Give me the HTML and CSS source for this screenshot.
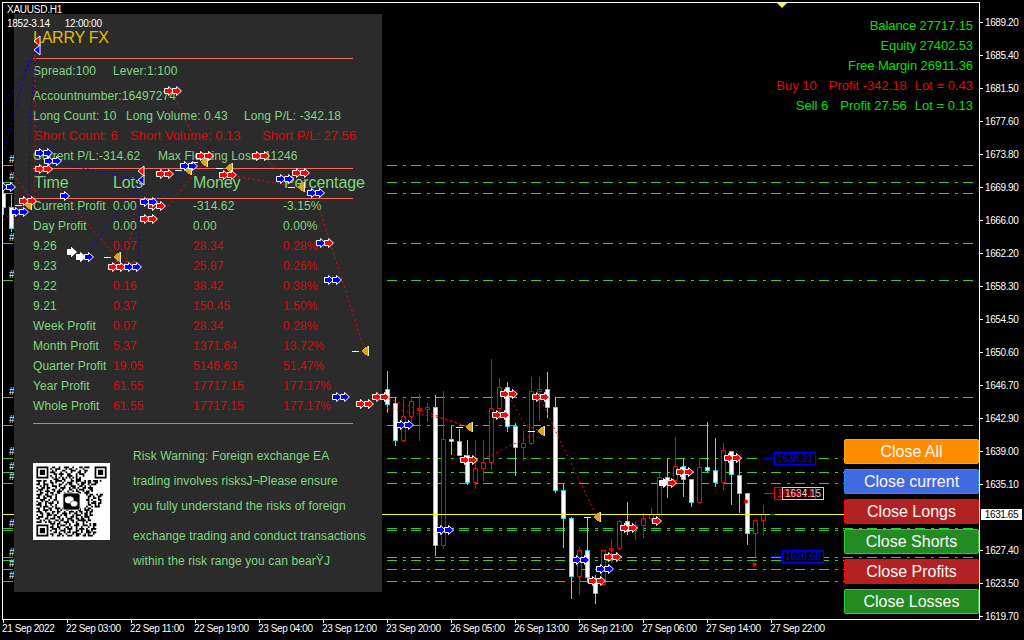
FILE: index.html
```html
<!DOCTYPE html>
<html lang="en">
<head>
<meta charset="utf-8">
<title>XAUUSD.H1</title>
<link rel="stylesheet" href="styles.css">
</head>
<body>
<div class="terminal">
  <main class="chart">
    <svg class="layer" viewBox="3 3 976 616" aria-hidden="true">
      <path class="levels" d="M3 165.5H979M3 182.5H979M3 193.5H979M3 243.5H979M3 280.5H979M3 397.5H979M3 425.5H979M3 458.5H979M3 472.5H979M3 483.5H979M3 528.5H979M3 530.5H979M3 557.5H979M3 560.5H979M3 569.5H979M3 581.5H979"/>
      <path class="wick-up" d="M3.5 190V215M11.5 195V232M387.5 371V413M395.5 397V446M435.5 395V556M451.5 426V455M459.5 429V456M467.5 440V485M507.5 382V432M515.5 423V476M547.5 372V418M555.5 397V493M563.5 483V548M571.5 517V599M587.5 517V583M595.5 575V604M627.5 502V535M667.5 459V498M683.5 458V497M691.5 479V507M707.5 422V472M715.5 438V487M731.5 452V505M739.5 457V513M747.5 493V545"/>
      <path class="wick-down" d="M403.5 399V441M411.5 399V422M419.5 394V441M427.5 403V422M443.5 391V549M475.5 440V489M483.5 440V481M491.5 359V470M499.5 378V419M523.5 431V461M531.5 377V445M539.5 377V421M579.5 547V595M603.5 550V585M611.5 539V563M619.5 520V550M635.5 522V540M643.5 513V538M651.5 508V522M659.5 473V517M675.5 437V480M699.5 458V503M723.5 443V490M755.5 520V557M763.5 505V535"/>
      <path class="body-up" d="M1.5 193.5h4v14h-4zM9.5 207.5h4v21h-4zM385.5 389.5h4v15h-4zM393.5 403.5h4v37h-4zM433.5 407.5h4v138h-4zM449.5 439.5h4v2h-4zM457.5 441.5h4v14h-4zM465.5 455.5h4v27h-4zM505.5 387.5h4v39h-4zM513.5 426.5h4v21h-4zM545.5 389.5h4v18h-4zM553.5 407.5h4v83h-4zM561.5 490.5h4v28h-4zM569.5 518.5h4v58h-4zM585.5 550.5h4v27h-4zM593.5 582.5h4v11h-4zM625.5 521.5h4v10h-4zM665.5 477.5h4v4h-4zM681.5 466.5h4v13h-4zM689.5 479.5h4v23h-4zM705.5 467.5h4v3h-4zM713.5 470.5h4v12h-4zM729.5 451.5h4v23h-4zM737.5 475.5h4v18h-4zM745.5 493.5h4v40h-4z"/>
      <path class="body-down" d="M401.5 416.5h4v24h-4zM409.5 401.5h4v15h-4zM417.5 408.5h4v2h-4zM425.5 407.5h4v2h-4zM441.5 439.5h4v106h-4zM473.5 468.5h4v14h-4zM481.5 462.5h4v6h-4zM489.5 408.5h4v54h-4zM497.5 387.5h4v21h-4zM521.5 443.5h4v4h-4zM529.5 391.5h4v52h-4zM537.5 389.5h4v2h-4zM577.5 550.5h4v26h-4zM601.5 550.5h4v34h-4zM609.5 548.5h4v2h-4zM617.5 521.5h4v27h-4zM633.5 525.5h4v2h-4zM641.5 518.5h4v7h-4zM649.5 514.5h4v4h-4zM657.5 477.5h4v37h-4zM673.5 466.5h4v14h-4zM697.5 467.5h4v35h-4zM721.5 450.5h4v32h-4zM753.5 520.5h4v13h-4zM761.5 514.5h4v6h-4z"/>
      <path class="bid" d="M3 514.5H979"/>
      <path class="tick-now" d="M770 514.5H775"/>
      <g class="ticket">
        <text x="9" y="163">#</text><text x="9" y="180">#</text><text x="9" y="241">#</text><text x="9" y="278">#</text><text x="9" y="395">#</text><text x="9" y="423">#</text><text x="9" y="455">#</text><text x="9" y="470">#</text><text x="9" y="480">#</text><text x="9" y="527">#</text><text x="9" y="556">#</text><text x="9" y="567">#</text><text x="9" y="579">#</text>
      </g>
    </svg>

    <section class="panel">
      <h1 class="brand">LARRY FX</h1>
      <div class="rule rule-first"></div>
      <div class="info info-spread"><span>Spread:100</span><span>Lever:1:100</span></div>
      <div class="info info-account"><span>Accountnumber:16497274</span></div>
      <div class="info info-long"><span>Long Count: 10</span><span>Long Volume: 0.43</span><span>Long P/L: -342.18</span></div>
      <div class="info info-short loss"><span>Short Count: 6</span><span>Short Volume: 0.13</span><span>Short P/L: 27.56</span></div>
      <div class="info info-current"><span>Current P/L:-314.62</span><span>Max Floating Loss:-11246</span></div>
      <div class="rule rule-tight"></div>
      <div class="heads"><span>Time</span><span>Lots</span><span>Money</span><span>Percentage</span></div>
      <div class="rule rule-head"></div>
      <div class="stats">
        <span>Current Profit</span><span>0.00</span><span>-314.62</span><span>-3.15%</span>
        <span>Day Profit</span><span>0.00</span><span>0.00</span><span>0.00%</span>
        <span>9.26</span><span class="loss">0.07</span><span class="loss">28.34</span><span class="loss">0.28%</span>
        <span>9.23</span><span class="loss">0.06</span><span class="loss">25.87</span><span class="loss">0.26%</span>
        <span>9.22</span><span class="loss">0.16</span><span class="loss">38.42</span><span class="loss">0.38%</span>
        <span>9.21</span><span class="loss">0.37</span><span class="loss">150.45</span><span class="loss">1.50%</span>
        <span>Week Profit</span><span class="loss">0.07</span><span class="loss">28.34</span><span class="loss">0.28%</span>
        <span>Month Profit</span><span class="loss">5.37</span><span class="loss">1371.64</span><span class="loss">13.72%</span>
        <span>Quarter Profit</span><span class="loss">19.05</span><span class="loss">5146.63</span><span class="loss">51.47%</span>
        <span>Year Profit</span><span class="loss">61.55</span><span class="loss">17717.15</span><span class="loss">177.17%</span>
        <span>Whole Profit</span><span class="loss">61.55</span><span class="loss">17717.15</span><span class="loss">177.17%</span>
      </div>
      <div class="rule rule-end"></div>
      <div class="notice">
        <svg class="qr" viewBox="-2 -2 45 45" aria-hidden="true">
          <rect x="-2" y="-2" width="45" height="45" fill="#fff"/>
          <path class="qr-eye" d="M.5.5h6v6h-6zM34.5.5h6v6h-6zM.5 34.5h6v6h-6z"/>
          <path class="qr-core" d="M2 2h3v3h-3zM36 2h3v3h-3zM2 36h3v3h-3z"/>
          <path class="qr-bits" d="M9 .5h2m2 0h1m2 0h3m2 0h1m3 0h2m1 0h3M8 1.5h1m2 0h3m3 0h1m1 0h2m2 0h1m3 0h1M9 2.5h1m1 0h1m3 0h2m3 0h3m2 0h1m2 0h2M8 3.5h3m3 0h1m2 0h1m2 0h1m3 0h2m2 0h1M10 4.5h2m1 0h3m2 0h2m3 0h1m1 0h3M8 5.5h1m2 0h1m2 0h1m3 0h3m2 0h1m3 0h1M9 6.5h1m1 0h1m1 0h1m1 0h1m1 0h1m1 0h1m1 0h1m1 0h1m1 0h1M10 7.5h3m2 0h2m3 0h1m2 0h3M0 8.5h3m1 0h2m2 0h1m2 0h4m1 0h1m3 0h2m1 0h3m2 0h1m1 0h2m1 0h3m1 0h1M1 9.5h1m2 0h1m3 0h2m1 0h1m3 0h1m2 0h3m2 0h1m2 0h3m1 0h2m2 0h2M0 10.5h2m2 0h3m2 0h1m3 0h2m2 0h1m1 0h2m3 0h1m1 0h2m2 0h1m1 0h3M2 11.5h1m1 0h1m1 0h1m2 0h3m1 0h1m2 0h1m3 0h3m2 0h2m1 0h1m2 0h1M0 12.5h1m2 0h2m1 0h2m3 0h1m2 0h3m2 0h1m1 0h2m1 0h1m2 0h2m1 0h3M1 13.5h3m2 0h1m2 0h2m2 0h1m1 0h1m3 0h2m2 0h1m1 0h3m3 0h2M0 14.5h1m1 0h1m2 0h3m2 0h1m1 0h3m3 0h1m2 0h1m1 0h2m2 0h1m1 0h2m1 0h1M2 15.5h2m2 0h1m1 0h2m2 0h2m2 0h1m1 0h3m3 0h2m2 0h3M0 16.5h3m2 0h2m2 0h1m1 0h1m17 0h1m1 0h2m2 0h1m1 0h2M1 17.5h1m2 0h1m1 0h3m2 0h1m18 0h2m1 0h1m2 0h2M0 18.5h2m2 0h2m2 0h1m2 0h1m18 0h1m2 0h2m1 0h1M2 19.5h3m2 0h1m2 0h2m17 0h2m1 0h1m3 0h2M0 20.5h1m2 0h1m1 0h2m2 0h1m2 0h1m17 0h1m2 0h2m2 0h1M1 21.5h2m2 0h1m1 0h3m2 0h1m17 0h1m1 0h3m1 0h2M0 22.5h3m2 0h1m2 0h1m2 0h1m18 0h2m2 0h1m1 0h1M2 23.5h1m1 0h3m2 0h1m1 0h1m17 0h1m2 0h1m1 0h3M0 24.5h2m2 0h1m2 0h2m2 0h3m1 0h2m2 0h1m2 0h2m1 0h1m2 0h1m1 0h2M1 25.5h1m2 0h3m1 0h1m3 0h1m1 0h1m2 0h2m1 0h1m3 0h2m2 0h3m1 0h1M0 26.5h3m2 0h1m3 0h2m1 0h2m2 0h1m2 0h3m1 0h1m1 0h2m2 0h1m1 0h2M2 27.5h2m2 0h2m1 0h1m2 0h1m2 0h3m1 0h1m2 0h2m2 0h1m1 0h2m1 0h1M0 28.5h1m2 0h1m2 0h3m1 0h2m2 0h1m1 0h2m3 0h1m1 0h3m2 0h2m1 0h2M1 29.5h3m2 0h1m3 0h1m1 0h2m3 0h1m2 0h2m1 0h1m2 0h1m1 0h3M0 30.5h2m3 0h2m1 0h3m2 0h1m1 0h1m2 0h3m2 0h2m1 0h2m2 0h1M2 31.5h1m1 0h1m2 0h1m3 0h2m1 0h2m2 0h1m1 0h2m2 0h5m1 0h2M0 32.5h3m2 0h1m1 0h2m1 0h1m2 0h1m2 0h3m2 0h1m1 0h1m3 0h1m1 0h1M8 33.5h3m1 0h2m3 0h1m1 0h1m3 0h2m2 0h1m3 0h1m1 0h2M9 34.5h1m2 0h1m1 0h3m2 0h1m2 0h3m2 0h3m1 0h1m1 0h2M8 35.5h2m2 0h2m3 0h2m1 0h1m2 0h1m2 0h1m3 0h1m2 0h1M9 36.5h3m1 0h1m2 0h1m1 0h3m2 0h1m1 0h3m1 0h1m2 0h3M8 37.5h1m2 0h1m2 0h3m2 0h1m3 0h2m1 0h1m2 0h2m1 0h1M10 38.5h2m1 0h1m2 0h1m1 0h2m1 0h3m2 0h1m2 0h3m1 0h2M8 39.5h2m3 0h2m2 0h1m3 0h1m1 0h3m2 0h1m1 0h1m2 0h1M9 40.5h1m2 0h2m1 0h1m2 0h3m2 0h2m2 0h2m1 0h3"/>
          <rect class="qr-badge" x="15.5" y="15.5" width="10" height="10" rx="1.2"/>
          <ellipse class="qr-chat" cx="19.2" cy="19.6" rx="2.6" ry="2.1"/>
          <ellipse class="qr-chat qr-chat-two" cx="22" cy="21.8" rx="2.2" ry="1.8"/>
        </svg>
        <div class="warning">
          <p>Risk Warning: Foreign exchange EA</p>
          <p>trading involves risksJ¬Please ensure</p>
          <p>you fully understand the risks of foreign</p>
          <p class="warning-gap">exchange trading and conduct transactions</p>
          <p>within the risk range you can bearŸJ</p>
        </div>
      </div>
    </section>

    <svg class="layer" viewBox="3 3 976 616" aria-hidden="true">
      <defs>
        <path id="r" class="arrow-red" d="M-4.5-2.5H-.5V-4.5L4.5 0-.5 4.5V2.5H-4.5Z"/>
        <path id="b" class="arrow-blue" d="M-4.5-2.5H-.5V-4.5L4.5 0-.5 4.5V2.5H-4.5Z"/>
        <path id="w" class="arrow-white" d="M-4.5-2.5H-.5V-4.5L4.5 0-.5 4.5V2.5H-4.5Z"/>
        <g id="rr"><use href="#r" x="-4"/><use href="#r" x="4"/></g>
        <g id="bb"><use href="#b" x="-4"/><use href="#b" x="4"/></g>
        <path id="fr" class="arrow-red" d="M3-5V5L-3 0Z"/>
        <path id="fb" class="arrow-blue" d="M3-5V5L-3 0Z"/>
        <g id="o"><path class="stop-bar" d="M-13 .5H-6"/><path class="stop" d="M3-5.5V5.5L-4 0Z"/><path class="stop-edge" d="M3.5-5V5"/></g>
      </defs>
      <g class="trail-blue">
        <path d="M36 52L24 75 3 105"/><path d="M36 52L30 120 29 200"/><path d="M29 60L3 155"/>
        <path d="M53 161L100 172 141 180"/><path d="M141 180L136 190 139 205V267"/><path d="M85 257L120 210 141 180"/><path d="M188 166L165 192 148 205"/>
      </g>
      <g class="trail-red">
        <path d="M35 45V200"/><path d="M173 93L195 140 205 156"/><path d="M261 156L285 175 301 187"/><path d="M228 175L275 183 301 187"/><path d="M44 169L80 215 117 257"/><path d="M318 205L365 351"/><path d="M204 162L165 210"/><path d="M136 208L125 265"/><path d="M10 170L40 210"/><path d="M3 220L30 200"/>
        <path d="M384 397L420 410 469 427"/><path d="M387 408L440 418 469 427"/><path d="M509 396L525 425 541 431"/><path d="M541 400L555 430 597 517"/><path d="M487 457L541 431"/>
      </g>
      <g>
        <use href="#fr" x="37" y="41"/><use href="#fb" x="37" y="50"/><use href="#fr" x="141" y="171"/><use href="#fb" x="141" y="180"/>
        <use href="#o" x="28" y="205"/><use href="#o" x="188" y="170"/><use href="#o" x="204" y="162"/><use href="#o" x="229" y="168"/><use href="#o" x="301" y="187"/><use href="#o" x="117" y="257"/><use href="#o" x="365" y="351"/><use href="#o" x="469" y="427"/><use href="#o" x="541" y="431"/><use href="#o" x="597" y="517"/>
        <use href="#rr" x="173" y="91"/><use href="#rr" x="44" y="169"/><use href="#rr" x="28" y="201"/><use href="#rr" x="157" y="206"/><use href="#rr" x="165" y="174"/><use href="#rr" x="205" y="156"/><use href="#rr" x="228" y="175"/><use href="#rr" x="261" y="156"/><use href="#rr" x="301" y="173"/><use href="#rr" x="149" y="219"/><use href="#rr" x="117" y="267"/><use href="#rr" x="365" y="404"/><use href="#rr" x="381" y="397"/><use href="#rr" x="509" y="394"/><use href="#rr" x="501" y="415"/><use href="#rr" x="469" y="460"/><use href="#rr" x="541" y="397"/><use href="#rr" x="597" y="581"/><use href="#rr" x="613" y="557"/><use href="#rr" x="629" y="528"/><use href="#rr" x="685" y="472"/><use href="#rr" x="733" y="458"/>
        <use href="#bb" x="44" y="153"/><use href="#bb" x="53" y="161"/><use href="#bb" x="7" y="187"/><use href="#b" x="65" y="196"/><use href="#bb" x="149" y="202"/><use href="#bb" x="189" y="166"/><use href="#bb" x="285" y="179"/><use href="#bb" x="316" y="193"/><use href="#bb" x="20" y="212"/><use href="#bb" x="133" y="267"/><use href="#bb" x="333" y="280"/><use href="#bb" x="341" y="397"/><use href="#bb" x="405" y="425"/><use href="#bb" x="445" y="530"/><use href="#bb" x="581" y="560"/><use href="#bb" x="605" y="569"/>
        <use href="#w" x="72" y="252"/><use href="#w" x="81" y="257"/><use href="#b" x="89" y="257"/><use href="#b" x="321" y="243"/><use href="#r" x="329" y="243"/><use href="#r" x="657" y="521"/><use href="#w" x="664" y="483"/><use href="#r" x="672" y="483"/>
      </g>
      <path class="tag-lead-blue" d="M763 458.5H774M772 556.5H782"/>
      <path class="tag-lead-red" d="M764 493.5H782"/>
      <rect class="tag-blue" x="774.5" y="452.5" width="41" height="12"/>
      <text class="tag-text tag-text-blue" x="777" y="462">1638.21</text>
      <rect class="tag-red" x="774.5" y="487.5" width="41" height="12"/>
      <text class="tag-text tag-text-red" x="777" y="497">1634.71</text>
      <rect class="tag-pink" x="782.5" y="487.5" width="41" height="12"/>
      <text class="tag-text tag-text-pink" x="785" y="497">1634.15</text>
      <rect class="tag-blue" x="782.5" y="550.5" width="41" height="12"/>
      <text class="tag-text tag-text-blue" x="785" y="560">1626.68</text>
      <circle class="dot" cx="746" cy="501.5" r="2"/>
      <circle class="dot" cx="754.5" cy="564.5" r="2"/>
      <path class="top-mark" d="M777 3H787L782 8Z"/>
    </svg>

    <div class="symbol">XAUUSD.H1</div>
    <div class="clock"><span>1852-3.14</span><span>12:00:00</span></div>

    <aside class="account">
      <div>Balance 27717.15</div>
      <div>Equity 27402.53</div>
      <div>Free Margin 26911.36</div>
      <div class="account-row account-buy"><span>Buy 10</span><span>Profit -342.18</span><span>Lot = 0.43</span></div>
      <div class="account-row"><span>Sell 6</span><span>Profit 27.56</span><span>Lot = 0.13</span></div>
    </aside>

    <nav class="actions">
      <button class="btn btn-orange">Close All</button>
      <button class="btn btn-blue">Close current</button>
      <button class="btn btn-red">Close Longs</button>
      <button class="btn btn-green">Close Shorts</button>
      <button class="btn btn-red">Close Profits</button>
      <button class="btn btn-green">Close Losses</button>
    </nav>
  </main>

  <div class="prices">
    <div class="price">1689.20</div><div class="price">1685.40</div><div class="price">1681.50</div><div class="price">1677.60</div><div class="price">1673.80</div><div class="price">1669.90</div><div class="price">1666.00</div><div class="price">1662.20</div><div class="price">1658.30</div><div class="price">1654.50</div><div class="price">1650.60</div><div class="price">1646.70</div><div class="price">1642.90</div><div class="price">1639.00</div><div class="price">1635.10</div><div class="price price-hidden"></div><div class="price">1627.40</div><div class="price">1623.50</div><div class="price">1619.70</div>
    <div class="price-now">1631.65</div>
  </div>

  <div class="times">
    <div class="time">21 Sep 2022</div><div class="time">22 Sep 03:00</div><div class="time">22 Sep 11:00</div><div class="time">22 Sep 19:00</div><div class="time">23 Sep 04:00</div><div class="time">23 Sep 12:00</div><div class="time">23 Sep 20:00</div><div class="time">26 Sep 05:00</div><div class="time">26 Sep 13:00</div><div class="time">26 Sep 21:00</div><div class="time">27 Sep 06:00</div><div class="time">27 Sep 14:00</div><div class="time">27 Sep 22:00</div>
  </div>
</div>
</body>
</html>
```

FILE: styles.css
```css
* { box-sizing: border-box; margin: 0; padding: 0; }

html, body {
  width: 1024px;
  height: 640px;
  overflow: hidden;
  background: #000;
}

body {
  font-family: "Liberation Sans", Arial, sans-serif;
  color: #fff;
}

.terminal {
  display: grid;
  grid-template-columns: 978px 44px;
  grid-template-rows: 618px 18px;
  padding: 2px 0 0 2px;
}

/* chart canvas */
.chart {
  position: relative;
  border: 1px solid #fff;
  background: #000;
  overflow: hidden;
}

.layer {
  position: absolute;
  inset: 0;
  display: block;
  width: 976px;
  height: 616px;
  fill: none;
}

.levels { stroke: #32cd32; stroke-dasharray: 10 6 3 5; }
.wick-up { stroke: #00ffff; }
.wick-down { stroke: #f00; }
.body-up { fill: #fff; stroke: #00ffff; }
.body-down { fill: #000; stroke: #f00; }
.bid { stroke: #ff0; }
.tick-now { stroke: #0a8a0a; }

.ticket text {
  fill: #fff;
  font: 10px "Liberation Sans", Arial, sans-serif;
}

.arrow-red, .arrow-blue, .arrow-white { stroke: #fff; stroke-width: 1; }
.arrow-red { fill: #f00; }
.arrow-blue { fill: #00f; }
.arrow-white { fill: #fff; }
.stop { fill: #daa520; shape-rendering: crispEdges; }
.stop-edge { stroke: #f4e4c0; }
.stop-bar { stroke: #fff; }

.trail-blue path { stroke: #00f; stroke-dasharray: 2 3; }
.trail-red path { stroke: #f00; stroke-dasharray: 2 3; }

.tag-lead-blue { stroke: #00f; }
.tag-lead-red { stroke: #f00; }
.tag-blue { stroke: #00f; fill: #000; }
.tag-red { stroke: #f00; fill: #000; }
.tag-pink { stroke: #ffc0cb; }
.tag-text { font: 10px "Liberation Sans", Arial, sans-serif; }
.tag-text-blue { fill: #00f; }
.tag-text-red { fill: #f00; }
.tag-text-pink { fill: #ffc0cb; }
.dot { fill: #f00; }
.top-mark { fill: #ff0; }

/* top left captions */
.symbol, .clock {
  position: absolute;
  left: 4px;
  font-size: 10px;
  letter-spacing: -.25px;
  line-height: 12px;
  white-space: nowrap;
}
.symbol { top: 1px; }
.clock { top: 15px; display: flex; gap: 15px; }

/* stats panel */
.panel {
  position: absolute;
  left: 11px;
  top: 11px;
  width: 368px;
  height: 578px;
  padding: 14px 29px 0 19px;
  background: #2b2b2b;
  color: #80d880;
  font-size: 12px;
  letter-spacing: .1px;
  line-height: 20px;
  white-space: nowrap;
}

.loss { color: #dc0a0a; }

.brand {
  height: 20px;
  font-size: 16px;
  font-weight: 400;
  letter-spacing: -.25px;
  line-height: 20px;
  color: #e6bc00;
}

.rule { height: 1px; background: #f46a5e; }
.rule-first { margin-top: 10px; }
.rule-tight { margin-top: 2px; }
.rule-head { margin-top: 5px; }
.rule-end { margin-top: 10px; background: #d9776c; }

.info { display: grid; height: 20px; }
.info-spread { grid-template-columns: 80px auto; margin-top: 2px; justify-content: start; }
.info-account { margin-top: 5px; }
.info-long { grid-template-columns: 93px 118px auto; justify-content: start; }
.info-short { grid-template-columns: 96px 132px auto; padding-left: 1px; justify-content: start; font-size: 13px; letter-spacing: 0; }
.info-current { grid-template-columns: 125px auto; justify-content: start; }

.heads {
  display: grid;
  grid-template-columns: 79px 80px 91px auto;
  justify-content: start;
  height: 20px;
  margin-top: 4px;
  padding-left: 1px;
  font-size: 16px;
  letter-spacing: -.1px;
}

.stats {
  display: grid;
  grid-template-columns: 80px 80px 90px auto;
  grid-auto-rows: 14px;
  row-gap: 6px;
  justify-content: start;
  line-height: 14px;
}

.notice {
  display: flex;
  gap: 23px;
  margin-top: 20px;
}

.qr {
  display: block;
  flex: none;
  width: 77px;
  height: 77px;
  margin-top: 19px;
  filter: blur(.45px);
}
.qr-eye { fill: none; stroke: #000; }
.qr-core { fill: #000; }
.qr-bits { fill: none; stroke: #000; }
.qr-badge { fill: #000; stroke: #fff; stroke-width: .5; }
.qr-chat { fill: #fff; }
.qr-chat-two { stroke: #000; stroke-width: .3; }

.warning p { height: 25px; line-height: 25px; }
.warning .warning-gap { margin-top: 5px; padding-left: 0; }

/* account summary */
.account {
  position: absolute;
  top: 13px;
  right: 6px;
  font-size: 13px;
  letter-spacing: -.1px;
  line-height: 20px;
  color: #00e000;
  text-align: right;
  white-space: nowrap;
}
.account-row { display: flex; justify-content: flex-end; gap: 8px; letter-spacing: 0; }
.account-row span:first-child { margin-right: 4px; }
.account-buy { color: #f00000; }

/* order buttons */
.actions {
  position: absolute;
  left: 841px;
  top: 436px;
  display: flex;
  flex-direction: column;
  gap: 5px;
}

.btn {
  width: 135px;
  height: 25px;
  border: 1px solid;
  border-radius: 2px;
  font: 16px/22px "Liberation Sans", Arial, sans-serif;
  color: #fffafa;
}
.btn-orange { background: #ff8c00; border-color: #ffa500; }
.btn-blue { background: #4169e1; border-color: #1e90ff; }
.btn-red { background: #b22222; border-color: #f00; }
.btn-green { background: #228b22; border-color: #32cd32; }

/* price axis */
.prices {
  position: relative;
  padding-top: 3.5px;
  height: 618px;
  overflow: visible;
}

.price {
  display: flex;
  align-items: center;
  gap: 2px;
  height: 33px;
  font-size: 10px;
  letter-spacing: -.4px;
  white-space: nowrap;
}
.price::before {
  content: "";
  flex: none;
  width: 3px;
  height: 1px;
  background: #fff;
}
.price-hidden::before { background: transparent; }

.price-now {
  position: absolute;
  left: 1px;
  top: 507px;
  width: 41px;
  height: 11px;
  background: #fff;
  color: #000;
  font-size: 10px;
  letter-spacing: -.4px;
  line-height: 11px;
  text-align: center;
}

/* time axis */
.times {
  grid-column: 1 / -1;
  display: flex;
}

.time {
  flex: none;
  width: 64px;
  font-size: 10px;
  letter-spacing: -.4px;
  line-height: 12px;
  white-space: nowrap;
}
.time::before {
  content: "";
  display: block;
  width: 1px;
  height: 3px;
  margin-left: 1px;
  background: #fff;
}
```
